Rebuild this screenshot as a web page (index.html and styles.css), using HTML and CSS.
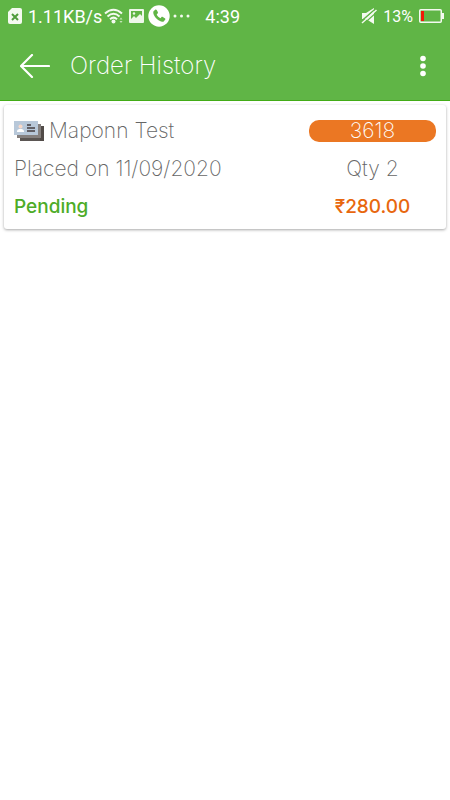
FILE: index.html
```
<!DOCTYPE html>
<html lang="en">
<head>
    <meta charset="UTF-8">
    <meta name="viewport" content="width=device-width, initial-scale=1.0">
    <title>Order History</title>
    <link rel="stylesheet" href="styles.css">
</head>
<body>
    <header class="header">
        <div class="status-bar">
            <div class="status-group">
                <svg class="sim-icon" width="14" height="16" viewBox="0 0 14 16">
                    <path d="M4 0h8a2 2 0 0 1 2 2v12a2 2 0 0 1-2 2H2a2 2 0 0 1-2-2V4z" fill="#f4faf0"/>
                    <path d="M4 6l6 6M10 6l-6 6" stroke="#4f9c3b" stroke-width="2"/>
                </svg>
                <span class="speed">1.11KB/s</span>
                <svg class="wifi-icon" width="20" height="16" viewBox="0 0 20 16">
                    <g fill="none" stroke="#f4faf0" stroke-width="2">
                        <path d="M1 5.500Q9.500 -2 18 5.500"/>
                        <path d="M3.500 8.500Q9.500 3 15.500 8.500"/>
                        <path d="M6 11.200Q9.500 8 13 11.200"/>
                    </g>
                    <circle cx="9.500" cy="13.500" r="2" fill="#f4faf0"/>
                    <path d="M15.500 11.500l1.500-2 1.500 2zM15.500 13l1.500 2 1.500-2z" fill="#c6e5ba"/>
                </svg>
                <svg class="photo-icon" width="15" height="14" viewBox="0 0 15 14">
                    <path fill-rule="evenodd" d="M1 0h13a1 1 0 0 1 1 1v12a1 1 0 0 1-1 1H1a1 1 0 0 1-1-1V1a1 1 0 0 1 1-1zM2 2v8l3-3 2 2 4-4 2 2V2z" fill="#eef7ea"/>
                    <circle cx="5" cy="4.500" r="1.200" fill="#eef7ea"/>
                </svg>
                <svg class="call-icon" width="22" height="22" viewBox="0 0 22 22">
                    <circle cx="11" cy="11" r="10.700" fill="#fff"/>
                    <path d="M7.200 4.700L5.500 6.200C4.600 8.500 6.500 11.700 8.700 13.700c2.200 2.100 5 3.500 7 2.700l1.400-1.600c.5-.6.300-1.200-.3-1.600l-2-1.200c-.6-.3-1.100-.2-1.500.3l-.8.900c-1.700-.8-3-2.100-3.800-3.700l.9-1c.5-.5.500-1 .2-1.500L8.700 4.900c-.4-.6-1-.7-1.500-.2z" fill="#60b546"/>
                </svg>
                <svg class="more-icon" width="17" height="4" viewBox="0 0 17 4" fill="#f4faf0">
                    <circle cx="2" cy="2" r="1.500"/>
                    <circle cx="8.500" cy="2" r="1.500"/>
                    <circle cx="15" cy="2" r="1.500"/>
                </svg>
                <span class="clock">4:39</span>
            </div>
            <div class="status-group">
                <svg class="mute-icon" width="16" height="16" viewBox="0 0 16 16">
                    <path d="M1 5h4l8-5v16l-8-5H1z" fill="#f4faf0"/>
                    <path d="M0 13.500L15 .500" stroke="#60b546" stroke-width="1.500"/>
                    <path d="M1 15L15.500 2" stroke="#f4faf0" stroke-width="1.500"/>
                    <path d="M2 16.500L16 4" stroke="#60b546" stroke-width="1.200"/>
                </svg>
                <span class="percent">13%</span>
                <svg class="battery-icon" width="25" height="14" viewBox="0 0 25 14">
                    <rect x=".750" y=".750" width="21.500" height="12.500" rx="1" fill="none" stroke="#f4faf0" stroke-width="1.500"/>
                    <rect x="23" y="4" width="2" height="6" fill="#f4faf0"/>
                    <rect x="2" y="2" width="3" height="10" fill="#f21808"/>
                </svg>
            </div>
        </div>
        <div class="toolbar">
            <button class="icon-button" type="button" aria-label="Back">
                <svg width="30" height="24" viewBox="0 0 30 24" fill="none" stroke="#fff" stroke-width="2.200" stroke-linecap="round" stroke-linejoin="round">
                    <path d="M29 12H1M12 1L1 12l11 11"/>
                </svg>
            </button>
            <h1 class="title">Order History</h1>
            <button class="icon-button" type="button" aria-label="More options">
                <svg width="6" height="22" viewBox="0 0 6 22" fill="#fff">
                    <circle cx="3" cy="3.500" r="2.800"/>
                    <circle cx="3" cy="11" r="2.800"/>
                    <circle cx="3" cy="18.500" r="2.800"/>
                </svg>
            </button>
        </div>
    </header>

    <main class="orders">
        <article class="order-card">
            <div class="customer">
                <svg width="30" height="22" viewBox="0 0 30 22">
                    <path d="M6 7h24v14H6z" fill="#5b5653"/>
                    <path d="M26 6h4v15h-4z" fill="#514b48"/>
                    <path d="M3 4h24v14H3z" fill="#85807e"/>
                    <path d="M0 1h24v14H0z" fill="#b8c8d9"/>
                    <circle cx="6.500" cy="6.500" r="2" fill="#f8d9c9"/>
                    <path d="M3 12c0-3 2-3 3.500-3S10 9 10 12z" fill="#fff"/>
                    <path d="M13 5h4M13 8h8M13 11h8" stroke="#453e40" stroke-width="1.500"/>
                </svg>
                <span>Maponn Test</span>
            </div>
            <div class="order-number">3618</div>
            <div class="date">Placed on 11/09/2020</div>
            <div class="quantity">Qty 2</div>
            <div class="state">Pending</div>
            <div class="price">₹280.00</div>
        </article>
    </main>
</body>
</html>
```
FILE: styles.css
```
* {
    box-sizing: border-box;
}
body {
    margin: 0;
    min-height: 100vh;
    background-color: #fff;
    color: #666;
    font-family: Inter, "Noto Sans", sans-serif;
    font-size: 21px;
    font-weight: 200;
}
svg {
    display: block;
    flex: none;
}
.header {
    background-color: #60b546;
    border-bottom: 1px solid #43ac17;
    color: #fff;
}
.status-bar {
    display: flex;
    justify-content: space-between;
    height: 32px;
    padding: 0 6px 0 8px;
    font-family: Roboto, sans-serif;
    font-size: 18px;
    font-weight: 400;
}
.status-group {
    display: flex;
    align-items: center;
}
.speed {
    margin: 0 2px 0 6px;
}
.wifi-icon {
    margin-right: 5px;
}
.call-icon {
    margin: 0 3px 0 4px;
}
.clock {
    margin-left: 15px;
}
.percent {
    margin: 0 6px;
    font-size: 16px;
}
.toolbar {
    display: flex;
    align-items: center;
    height: 68px;
    padding: 0 20px;
}
.icon-button {
    display: flex;
    padding: 0 4px 0 0;
    border: none;
    background: none;
    cursor: pointer;
}
.toolbar .icon-button:last-child {
    padding: 0 4px;
}
.title {
    flex: 1;
    margin: 0 16px;
    font-size: 24px;
    font-weight: 200;
    line-height: 28px;
}
.orders {
    padding: 4px;
}
.order-card {
    display: grid;
    grid-template-columns: 1fr 127px;
    grid-auto-rows: 24px;
    row-gap: 14px;
    align-items: center;
    padding: 14px 10px 10px;
    border-radius: 3px;
    background-color: #fff;
    box-shadow: 0 1px 3px rgba(0, 0, 0, 0.35);
    line-height: 24px;
}
.customer {
    display: flex;
    align-items: center;
    gap: 5px;
}
.order-number {
    border-radius: 10px;
    background-color: #eb7723;
    color: #fff;
    line-height: 22px;
    text-align: center;
}
.quantity,
.price {
    text-align: center;
}
.state,
.price {
    font-size: 19px;
    font-weight: 500;
}
.state {
    color: #4dac28;
}
.price {
    color: #e8670e;
}
```
